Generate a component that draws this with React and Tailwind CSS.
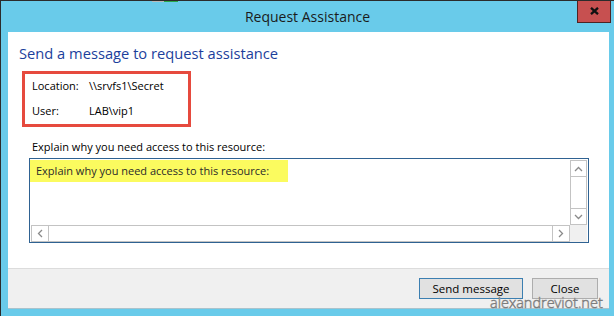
export default function App() {
  const Up = () => (
    <svg width="9" height="6" viewBox="0 0 9 6"><path d="M1 5 L4.5 1.5 L8 5" fill="none" stroke="#8a8a8a" strokeWidth="1.3" /></svg>
  );
  const Down = () => (
    <svg width="9" height="6" viewBox="0 0 9 6"><path d="M1 1 L4.5 4.5 L8 1" fill="none" stroke="#8a8a8a" strokeWidth="1.3" /></svg>
  );
  const Left = () => (
    <svg width="6" height="9" viewBox="0 0 6 9"><path d="M5 1 L1.5 4.5 L5 8" fill="none" stroke="#8a8a8a" strokeWidth="1.3" /></svg>
  );
  const Right = () => (
    <svg width="6" height="9" viewBox="0 0 6 9"><path d="M1 1 L4.5 4.5 L1 8" fill="none" stroke="#8a8a8a" strokeWidth="1.3" /></svg>
  );
  return (
    <div className="relative w-[614px] h-[316px] overflow-hidden bg-[#69cbea] border-t border-l border-[#2b2b2b] font-['Open_Sans',sans-serif] text-black">
      <div className="absolute top-[-1px] left-[151px] h-[2px] w-[12px] bg-[#b9b9b9]" />
      <div className="absolute top-[-1px] left-[163px] h-[2px] w-[14px] bg-[#2aa748]" />

      {/* title bar */}
      <div className="relative h-[31px] flex items-center justify-center">
        <span className="text-[14px] leading-[20px] text-[#1b1b1b] mt-[1px]">Request Assistance</span>
        <div className="absolute right-[3px] top-[-1px] w-[34px] h-[23px] bg-[#c75050] border border-t-0 border-[#4e2323] flex items-center justify-center">
          <svg width="9" height="8" viewBox="0 0 9 8">
            <path d="M1 0.8 L8 7.2 M8 0.8 L1 7.2" stroke="#111" strokeWidth="2.3" />
          </svg>
        </div>
      </div>

      {/* client area */}
      <div className="ml-[7px] w-[601px] h-[277px] flex flex-col">
        <div className="h-[236px] bg-white flex flex-col">
          <div className="mt-[11px] ml-[11px] text-[14.7px] leading-[20px] text-[#1c3f9c]">
            Send a message to request assistance
          </div>
          <div className="mt-[8px] ml-[14px] w-[169px] h-[56px] border-[3px] border-[#e64a3e] pt-[4px] pl-[7px] text-[11px] leading-[16px]">
            <div className="flex">
              <span className="w-[57px]">Location:</span>
              <span>\\srvfs1\Secret</span>
            </div>
            <div className="flex mt-[9px]">
              <span className="w-[57px]">User:</span>
              <span>LAB\vip1</span>
            </div>
          </div>
          <div className="mt-[12px] ml-[24px] text-[11px] leading-[16px]">
            Explain why you need access to this resource:
          </div>
          <div className="mt-[3px] ml-[21px] w-[560px] h-[85px] border border-[#2f6292] flex">
            <div className="flex-1 flex flex-col">
              <div className="flex-1">
                <div className="mt-[1px] w-[258px] h-[22px] bg-[#fbfb5f] pl-[6px] text-[11px] leading-[22px] text-[#2a2a2a] whitespace-nowrap">
                  Explain why you need access to this resource:
                </div>
              </div>
              <div className="h-[17px] ml-[1px] border border-[#c3c3c3] flex">
                <div className="w-[17px] border-r border-[#c3c3c3] flex items-center justify-center"><Left /></div>
                <div className="flex-1" />
                <div className="w-[17px] border-l border-[#c3c3c3] flex items-center justify-center"><Right /></div>
              </div>
            </div>
            <div className="w-[18px] pr-[1px] flex flex-col">
              <div className="flex-1 mt-[1px] border border-[#c3c3c3] flex flex-col">
                <div className="h-[16px] border-b border-[#c3c3c3] flex items-center justify-center"><Up /></div>
                <div className="flex-1" />
                <div className="h-[16px] border-t border-[#c3c3c3] flex items-center justify-center"><Down /></div>
              </div>
              <div className="h-[17px] bg-[#f0f0f0]" />
            </div>
          </div>
        </div>
        <div className="flex-1 bg-[#f0f0f0] border-t border-[#dcdcdc] border-b border-b-[#a9c3cd] flex justify-end items-start pt-[9px] pr-[11px] gap-[9px]">
          <div className="w-[104px] h-[21px] bg-[#e1e1e1] border border-[#3c7fb1] flex items-center justify-center text-[11.5px]">
            Send message
          </div>
          <div className="w-[66px] h-[21px] bg-[#e1e1e1] border border-[#adadad] flex items-center justify-center text-[11.5px]">
            Close
          </div>
        </div>
      </div>

      <div className="absolute left-[489px] top-[293px] text-[14.5px] leading-[18px] font-light text-[#ececec] [-webkit-text-stroke:0.6px_#7d7d7d] font-['Open_Sans',sans-serif]">
        alexandreviot.net
      </div>
    </div>
  );
}
